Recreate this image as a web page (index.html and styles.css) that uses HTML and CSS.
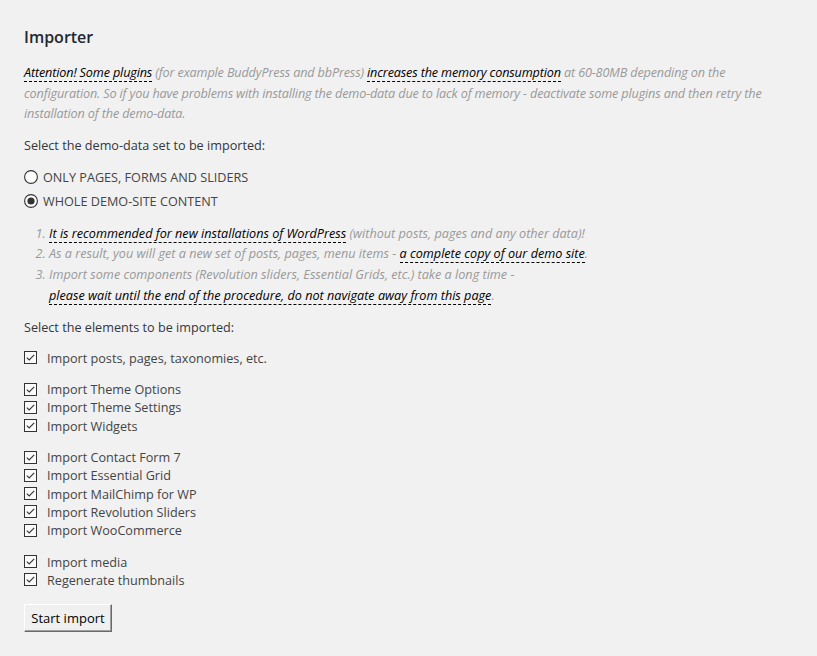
FILE: index.html
```html
<!DOCTYPE html>
<html lang="en">
<head>
<meta charset="utf-8">
<title>Importer</title>
<link rel="stylesheet" href="styles.css">
</head>
<body>
<div class="wrap">
  <h2 class="title">Importer</h2>
  <p class="notice"><span class="hl">Attention! Some plugins</span> (for example BuddyPress and bbPress) <span class="hl">increases the memory consumption</span> at 60-80MB depending on the<br>configuration. So if you have problems with installing the demo-data due to lack of memory - deactivate some plugins and then retry the installation of the demo-data.</p>

  <p class="label">Select the demo-data set to be imported:</p>
  <div class="radios">
    <label class="radio">
      <svg class="rb" width="14" height="14" viewBox="0 0 14 14"><circle cx="7" cy="7" r="6.4" fill="#fff" stroke="#333" stroke-width="1.1"/></svg>
      <span>ONLY PAGES, FORMS AND SLIDERS</span>
    </label>
    <label class="radio">
      <svg class="rb" width="14" height="14" viewBox="0 0 14 14"><circle cx="7" cy="7" r="6.4" fill="#fff" stroke="#333" stroke-width="1.1"/><circle cx="7" cy="7" r="3.6" fill="#333"/></svg>
      <span>WHOLE DEMO-SITE CONTENT</span>
    </label>
  </div>

  <ol class="notes">
    <li><span class="hl">It is recommended for new installations of WordPress</span> (without posts, pages and any other data)!</li>
    <li>As a result, you will get a new set of posts, pages, menu items - <span class="hl">a complete copy of our demo site</span>.</li>
    <li>Import some components (Revolution sliders, Essential Grids, etc.) take a long time -<br><span class="hl">please wait until the end of the procedure, do not navigate away from this page</span>.</li>
  </ol>

  <p class="label label-el">Select the elements to be imported:</p>

  <div class="group">
    <label class="check"><svg class="cb" width="13" height="13" viewBox="0 0 13 13"><rect x="0.5" y="0.5" width="12" height="12" fill="#fbfbfb" stroke="#333"/><path d="M2.8 6.6 L5.2 9 L10.2 3.8" fill="none" stroke="#333" stroke-width="1.1"/></svg><span>Import posts, pages, taxonomies, etc.</span></label>
  </div>
  <div class="group">
    <label class="check"><svg class="cb" width="13" height="13" viewBox="0 0 13 13"><rect x="0.5" y="0.5" width="12" height="12" fill="#fbfbfb" stroke="#333"/><path d="M2.8 6.6 L5.2 9 L10.2 3.8" fill="none" stroke="#333" stroke-width="1.1"/></svg><span>Import Theme Options</span></label>
    <label class="check"><svg class="cb" width="13" height="13" viewBox="0 0 13 13"><rect x="0.5" y="0.5" width="12" height="12" fill="#fbfbfb" stroke="#333"/><path d="M2.8 6.6 L5.2 9 L10.2 3.8" fill="none" stroke="#333" stroke-width="1.1"/></svg><span>Import Theme Settings</span></label>
    <label class="check"><svg class="cb" width="13" height="13" viewBox="0 0 13 13"><rect x="0.5" y="0.5" width="12" height="12" fill="#fbfbfb" stroke="#333"/><path d="M2.8 6.6 L5.2 9 L10.2 3.8" fill="none" stroke="#333" stroke-width="1.1"/></svg><span>Import Widgets</span></label>
  </div>
  <div class="group">
    <label class="check"><svg class="cb" width="13" height="13" viewBox="0 0 13 13"><rect x="0.5" y="0.5" width="12" height="12" fill="#fbfbfb" stroke="#333"/><path d="M2.8 6.6 L5.2 9 L10.2 3.8" fill="none" stroke="#333" stroke-width="1.1"/></svg><span>Import Contact Form 7</span></label>
    <label class="check"><svg class="cb" width="13" height="13" viewBox="0 0 13 13"><rect x="0.5" y="0.5" width="12" height="12" fill="#fbfbfb" stroke="#333"/><path d="M2.8 6.6 L5.2 9 L10.2 3.8" fill="none" stroke="#333" stroke-width="1.1"/></svg><span>Import Essential Grid</span></label>
    <label class="check"><svg class="cb" width="13" height="13" viewBox="0 0 13 13"><rect x="0.5" y="0.5" width="12" height="12" fill="#fbfbfb" stroke="#333"/><path d="M2.8 6.6 L5.2 9 L10.2 3.8" fill="none" stroke="#333" stroke-width="1.1"/></svg><span>Import MailChimp for WP</span></label>
    <label class="check"><svg class="cb" width="13" height="13" viewBox="0 0 13 13"><rect x="0.5" y="0.5" width="12" height="12" fill="#fbfbfb" stroke="#333"/><path d="M2.8 6.6 L5.2 9 L10.2 3.8" fill="none" stroke="#333" stroke-width="1.1"/></svg><span>Import Revolution Sliders</span></label>
    <label class="check"><svg class="cb" width="13" height="13" viewBox="0 0 13 13"><rect x="0.5" y="0.5" width="12" height="12" fill="#fbfbfb" stroke="#333"/><path d="M2.8 6.6 L5.2 9 L10.2 3.8" fill="none" stroke="#333" stroke-width="1.1"/></svg><span>Import WooCommerce</span></label>
  </div>
  <div class="group">
    <label class="check"><svg class="cb" width="13" height="13" viewBox="0 0 13 13"><rect x="0.5" y="0.5" width="12" height="12" fill="#fbfbfb" stroke="#333"/><path d="M2.8 6.6 L5.2 9 L10.2 3.8" fill="none" stroke="#333" stroke-width="1.1"/></svg><span>Import media</span></label>
    <label class="check"><svg class="cb" width="13" height="13" viewBox="0 0 13 13"><rect x="0.5" y="0.5" width="12" height="12" fill="#fbfbfb" stroke="#333"/><path d="M2.8 6.6 L5.2 9 L10.2 3.8" fill="none" stroke="#333" stroke-width="1.1"/></svg><span>Regenerate thumbnails</span></label>
  </div>

  <button class="btn" type="button">Start import</button>
</div>
</body>
</html>
```
FILE: styles.css
```css
html, body {
  margin: 0;
  padding: 0;
  background: #f1f1f1;
}
body {
  font-family: "Open Sans", "Noto Sans", "Liberation Sans", sans-serif;
  font-size: 12.65px;
  color: #444;
}
.wrap {
  padding: 22px 0 20px 24px;
}
.title {
  margin: 0;
  font-size: 16px;
  line-height: 30px;
  font-weight: 600;
  color: #23282d;
}
.notice {
  margin: 10px 0 0;
  font-style: italic;
  color: #999;
  line-height: 20.5px;
  letter-spacing: -0.15px;
}
.hl {
  color: #000;
  border-bottom: 1px dashed #000;
}
.label {
  margin: 11px 0 0;
  line-height: 20px;
  color: #32373c;
}
.radios {
  margin-top: 10px;
  display: flex;
  flex-direction: column;
}
.radio {
  display: flex;
  align-items: center;
  gap: 5px;
  height: 24px;
}
.rb {
  flex: none;
}
.notes {
  margin: 10px 0 0;
  padding-left: 25px;
  font-style: italic;
  color: #999;
  line-height: 20.8px;
}
.label-el {
  margin-top: 11px;
}
.group {
  display: flex;
  flex-direction: column;
  margin-top: 13px;
}
.label-el + .group {
  margin-top: 12px;
}
.check {
  display: flex;
  align-items: center;
  gap: 10px;
  height: 18.3px;
}
.cb {
  flex: none;
}
.btn {
  display: block;
  margin-top: 15px;
  width: 88px;
  height: 28px;
  padding: 0;
  font-family: inherit;
  font-size: 13px;
  color: #000;
  background: #f0f0f0;
  border: 1px solid;
  border-color: #fff #6a6a6a #6a6a6a #fff;
  box-shadow: inset -1px -1px 0 #a0a0a0;
}
```
